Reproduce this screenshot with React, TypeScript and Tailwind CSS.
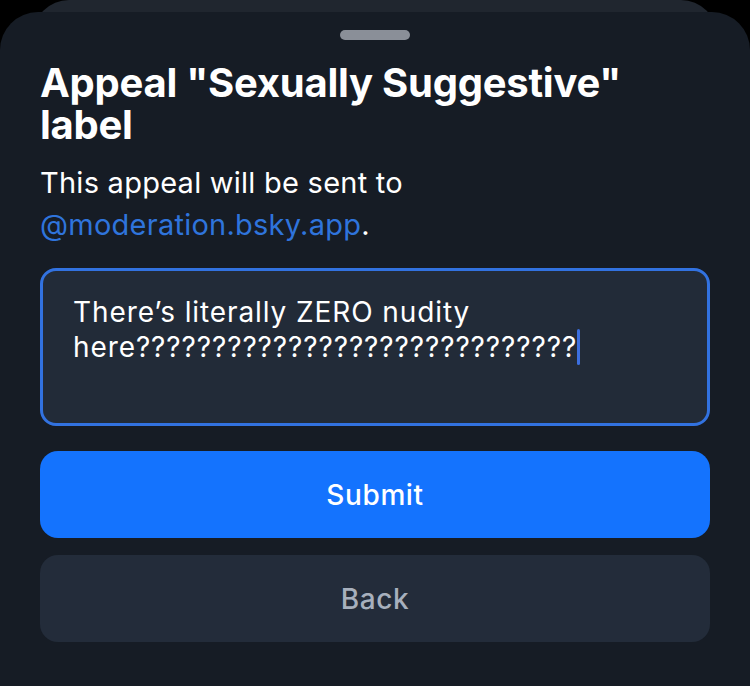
import React from "react";

export default function App() {
  const q = "?".repeat(29);
  return (
    <div
      className="w-[750px] h-[686px] bg-black overflow-hidden flex flex-col"
      style={{ fontFamily: "Inter, 'Liberation Sans', sans-serif" }}
    >
      <div className="h-[12px] mx-[33px] overflow-hidden shrink-0">
        <div className="h-[60px] bg-[#20262f] rounded-t-[36px]" />
      </div>
      <div className="flex-1 bg-[#161c25] rounded-t-[38px] flex flex-col px-[40px]">
        <div className="flex justify-center pt-[18px]">
          <div className="w-[70px] h-[10px] rounded-full bg-[#8a8f98]" />
        </div>
        <h1 className="mt-[22px] text-[40px] leading-[42px] font-bold text-white tracking-[-0.25px]">
          Appeal "Sexually Suggestive" label
        </h1>
        <p className="mt-[16px] text-[29px] leading-[42px] text-white tracking-[0.25px]">
          This appeal will be sent to
          <br />
          <span className="text-[#2f74dc]">@moderation.bsky.app</span>.
        </p>
        <div className="mt-[22px] h-[158px] rounded-[16px] border-[3px] border-[#3272e0] bg-[#222b38] pl-[30px] pr-[20px] pt-[24px]">
          <div className="text-[28px] leading-[35px] text-white tracking-[0.9px] whitespace-nowrap">
            There’s literally ZERO nudity
            <br />
            here{q}
            <span className="inline-block align-middle w-[3px] h-[36px] bg-[#3c6fe0] rounded-sm -mt-[4px]" />
          </div>
        </div>
        <button className="mt-[25px] h-[87px] rounded-[18px] bg-[#1473fe] text-white text-[28px] font-medium tracking-[0.6px]">
          Submit
        </button>
        <button className="mt-[17px] h-[87px] rounded-[18px] bg-[#232c3a] text-[#a7b0bd] text-[28px] font-medium tracking-[0.6px]">
          Back
        </button>
      </div>
    </div>
  );
}
